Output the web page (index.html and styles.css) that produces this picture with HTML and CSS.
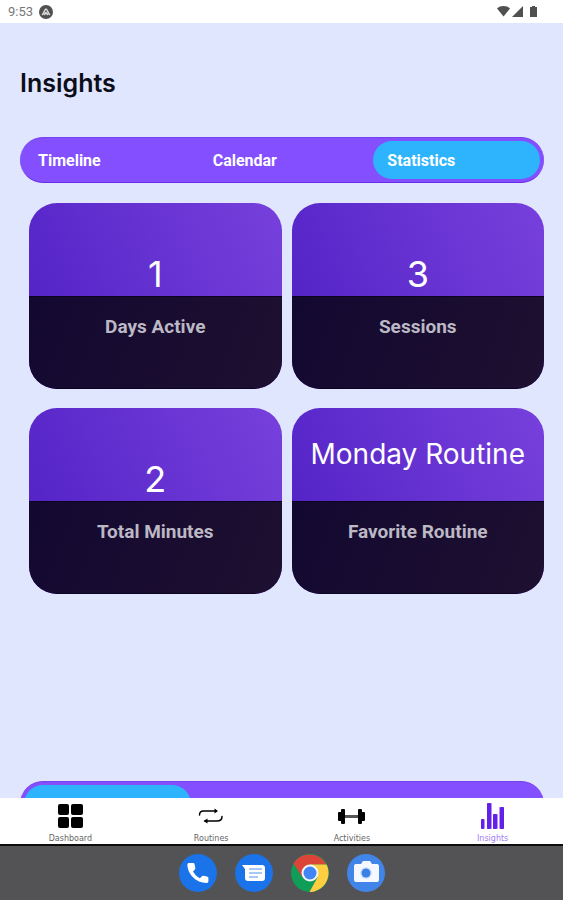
FILE: index.html
```html
<!DOCTYPE html>
<html lang="en">
<head>
<meta charset="utf-8">
<meta name="viewport" content="width=device-width, initial-scale=1">
<title>Insights</title>
<link rel="stylesheet" href="styles.css">
</head>
<body>
<header class="status">
  <span class="time">9:53</span>
  <svg class="app-mark" viewBox="0 0 14 14" width="14" height="14" aria-hidden="true"><circle cx="7" cy="7" r="7" fill="#505050"/><path d="M3.500 9.500C5 8 5.800 4 7 4s2 4 3.500 5.500M7 7.500 5.500 9.500M7 7.500l1.500 2" fill="none" stroke="#ddd" stroke-width="1.500" stroke-linecap="round"/></svg>
  <svg class="signals" viewBox="0 0 42 14" width="42" height="14" aria-hidden="true"><g fill="#505050"><path d="M0 3.500C3 .2 10 .2 13 3.500L6.500 11.500z"/><path d="M26 1v11H15z"/><path d="M33 2h2V1h3v1h2v10h-7z"/></g></svg>
</header>
<main class="screen">
  <h1>Insights</h1>
  <div class="tabs">
    <button type="button">Timeline</button>
    <button type="button">Calendar</button>
    <button type="button" class="active">Statistics</button>
  </div>
  <section class="cards">
    <article class="card"><p class="value">1</p><h2>Days Active</h2></article>
    <article class="card"><p class="value">3</p><h2>Sessions</h2></article>
    <article class="card"><p class="value">2</p><h2>Total Minutes</h2></article>
    <article class="card"><p class="value name">Monday Routine</p><h2>Favorite Routine</h2></article>
  </section>
  <div class="tabs">
    <button type="button" class="active" aria-label="First range"></button>
    <button type="button" aria-label="Second range"></button>
    <button type="button" aria-label="Third range"></button>
  </div>
</main>
<nav class="nav">
  <a href="#dashboard"><svg viewBox="0 0 28 28" width="28" height="28" aria-hidden="true"><rect x="2" y="2" width="11" height="11" rx="2"/><rect x="15" y="2" width="12" height="11" rx="2"/><rect x="2" y="15" width="11" height="11" rx="2"/><rect x="15" y="15" width="12" height="11" rx="2"/></svg>Dashboard</a>
  <a href="#routines"><svg viewBox="0 0 28 28" width="28" height="28" aria-hidden="true"><g fill="none" stroke="#000" stroke-width="1.500" stroke-linecap="round"><path d="M2.500 13c0-3 1.500-4 4-4H19M25 14.500c0 3-1.500 4.500-5 4.500H8"/></g><path d="m17.500 6.500 3.500 2.500-3.500 2.500zM10.500 16.500 6.500 19l4 2.500z"/></svg>Routines</a>
  <a href="#activities"><svg viewBox="0 0 28 28" width="28" height="28" aria-hidden="true"><rect x="3" y="7" width="4" height="15" rx="1"/><rect x="0" y="10" width="4" height="9" rx="1"/><rect x="20" y="7" width="4" height="15" rx="1"/><rect x="23" y="10" width="4" height="9" rx="1"/><path d="M7 13h13v3H7z" fill="#555"/></svg>Activities</a>
  <a href="#insights" class="current"><svg viewBox="0 0 28 28" width="28" height="28" aria-hidden="true"><g fill="#b391f8"><rect x="2" y="17" width="4" height="10" rx="1"/><rect x="8" y="1" width="5" height="26" rx="1"/><rect x="14" y="12" width="5" height="15" rx="1"/><rect x="20" y="5" width="5" height="22" rx="1"/></g><g fill="#6320e6"><rect x="2" y="17" width="3" height="10" rx="1"/><rect x="8" y="1" width="4" height="26" rx="1"/><rect x="14" y="12" width="4" height="15" rx="1"/><rect x="21" y="5" width="4" height="22" rx="1"/></g></svg>Insights</a>
</nav>
<footer class="dock">
  <button type="button" aria-label="Phone"><svg viewBox="0 0 38 38" width="38" height="38"><circle cx="19" cy="19" r="19" fill="#1a73e8"/><path d="M10 9h4c1 0 1.400.5 1.600 1.400l.7 3.300c.2.900 0 1.400-.6 2l-1.700 1.700c1.700 3 3.900 5.200 6.900 6.800l1.800-1.800c.6-.6 1.200-.8 2-.6l3.200.8c1 .2 1.500.8 1.500 1.700v3c0 1-.6 1.600-1.600 1.600C17 29 8.500 20 8.400 10.700 8.400 9.700 9 9 10 9z" fill="#fff"/></svg></button>
  <button type="button" aria-label="Messages"><svg viewBox="0 0 38 38" width="38" height="38"><circle cx="19" cy="19" r="19" fill="#1a73e8"/><path d="M7 11h20q3 0 3 3v10q0 3-3 3H13q-3 0-3-3V15z" fill="#fff"/><path d="M14 15h13M14 19h13M14 23h9" stroke="#a9c8fa" stroke-width="2"/></svg></button>
  <button type="button" aria-label="Chrome"><svg viewBox="0 0 38 38" width="38" height="38"><circle cx="19" cy="19" r="19" fill="#0f9d58"/><path d="M2.500 9.500a19 19 0 0 1 33 1H19l-7.500 13z" fill="#db4437"/><path d="M35.500 10.500A19 19 0 0 1 18.500 38l8-14.500L19 10.500z" fill="#ffcd40"/><circle cx="19" cy="19" r="8.500" fill="#f4f4f4"/><circle cx="19" cy="19" r="6.500" fill="#4285f4"/></svg></button>
  <button type="button" aria-label="Camera"><svg viewBox="0 0 38 38" width="38" height="38"><circle cx="19" cy="19" r="19" fill="#4285e8"/><path d="M9 10h5l2-3h7l2 3h5q2 0 2 2v14q0 2-2 2H9q-2 0-2-2V12q0-2 2-2z" fill="#f5f8fe"/><circle cx="19" cy="19" r="6" fill="#d3e3fb"/><circle cx="19" cy="19" r="4.500" fill="#3b80e4"/></svg></button>
</footer>
</body>
</html>
```
FILE: styles.css
```css
* { box-sizing: border-box; }
body {
  margin: 0;
  height: 100vh;
  display: flex;
  flex-direction: column;
  background: #e1e6ff;
  font-family: Roboto, sans-serif;
}
button { border: 0; background: none; padding: 0; font: inherit; color: inherit; }
h1, h2, p { margin: 0; }
svg { display: block; }
.status {
  flex: none;
  height: 23px;
  padding: 0 24px 0 8px;
  display: flex;
  align-items: center;
  gap: 6px;
  background: #fff;
  color: #777;
  font-size: 13px;
}
.signals { margin-left: auto; }
.screen {
  flex: 1;
  min-height: 0;
  overflow: hidden;
  padding: 44px 19px 0 20px;
}
h1 {
  font: 600 25px/32px Inter, sans-serif;
  color: #0b0d18;
  margin-bottom: 38px;
}
.tabs {
  height: 46px;
  padding: 3px 0;
  display: grid;
  grid-template-columns: repeat(3, 1fr);
  border-radius: 23px;
  background: #834fff;
  border-bottom: 1px solid #6a2ce8;
  border-top: 1px solid #7440f0;
  color: #fff;
  font-size: 16px;
  font-weight: 700;
}
.tabs button {
  margin: 0 4px;
  padding: 0 14px;
  border-radius: 20px;
  text-align: left;
}
.tabs .active { background: #2eb4fd; }
.cards {
  display: grid;
  grid-template-columns: 1fr 1fr;
  gap: 19px 10px;
  padding: 20px 0 187px 9px;
}
.card {
  min-width: 0;
  display: grid;
  grid-template-rows: 93px 93px;
  border-radius: 28px;
  overflow: hidden;
  text-align: center;
  background: linear-gradient(65deg, #5020c4, #7740dc);
}
.value {
  align-self: end;
  padding-bottom: 1px;
  color: #fff;
  font: 400 36px/42px Inter, sans-serif;
}
.value.name {
  align-self: center;
  font-size: 28px;
  white-space: nowrap;
}
.card h2 {
  padding-top: 19px;
  background: linear-gradient(110deg, #130830, #1d1030);
  border-top: 1px solid #0b0320;
  border-bottom: 1px solid #0b0320;
  color: #bcb8c4;
  font-size: 19px;
  line-height: 22px;
  font-weight: 700;
}
.nav {
  flex: none;
  height: 46px;
  display: grid;
  grid-template-columns: repeat(4, 1fr);
  background: #fff;
}
.nav a {
  display: flex;
  flex-direction: column;
  align-items: center;
  gap: 4px;
  padding-top: 4px;
  color: #666;
  font: 8px/10px "DejaVu Sans", sans-serif;
  text-decoration: none;
}
.nav .current { color: #a27cf7; }
.dock {
  flex: none;
  height: 56px;
  display: flex;
  align-items: center;
  justify-content: center;
  gap: 18px;
  border-top: 2px solid #0c0c0c;
  background: #535355;
}
```
